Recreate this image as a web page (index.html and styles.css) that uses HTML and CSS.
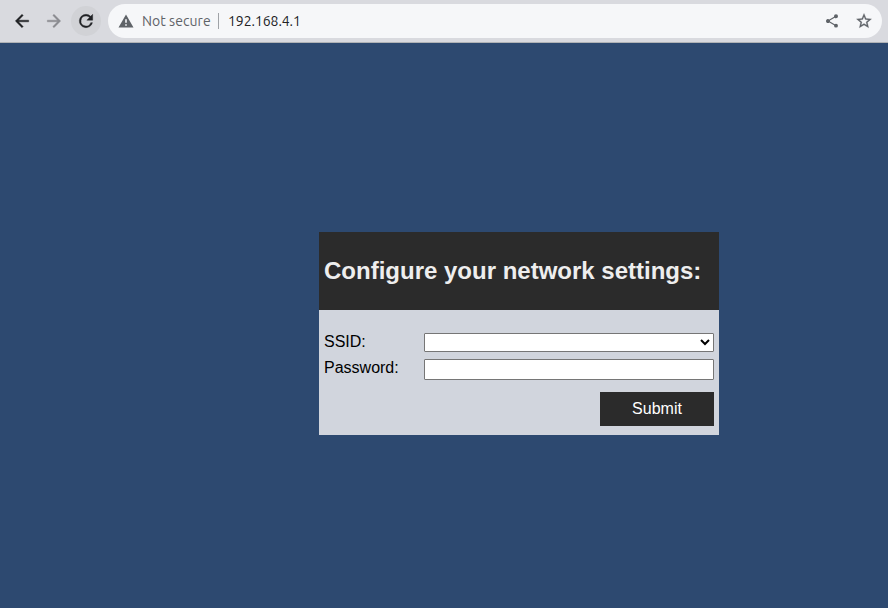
FILE: index.html
```html
<!DOCTYPE html>
<html lang="en">
<head>
<meta charset="utf-8">
<title>Network settings</title>
<link rel="stylesheet" href="styles.css">
</head>
<body>
<header class="toolbar">
  <span class="nav"><svg class="icon" viewBox="0 0 24 24"><path d="M20 11H7.83l5.59-5.59L12 4l-8 8 8 8 1.41-1.41L7.83 13H20z"/></svg></span>
  <span class="nav nav-off"><svg class="icon" viewBox="0 0 24 24"><path d="M12 4l-1.41 1.41L16.17 11H4v2h12.17l-5.58 5.59L12 20l8-8z"/></svg></span>
  <span class="nav nav-round"><svg class="icon" viewBox="0 0 24 24"><path d="M17.65 6.35A7.96 7.96 0 0 0 12 4a8 8 0 1 0 7.73 10h-2.08A6 6 0 1 1 12 6c1.66 0 3.14.69 4.22 1.78L13 11h7V4z"/></svg></span>
  <div class="address">
    <svg class="warning" viewBox="0 0 16 14"><path fill-rule="evenodd" d="M8 .5L15.5 13.500H.5zM7.200 5.200v3.600h1.600V5.200zM7.200 10.200v1.600h1.600v-1.600z"/></svg>
    <span class="status">Not secure</span>
    <span class="divider"></span>
    <span class="url">192.168.4.1</span>
    <svg class="share" viewBox="0 0 24 24"><path d="M18 16.080c-.76 0-1.440.3-1.960.77L8.910 12.700c.05-.23.09-.46.09-.7s-.04-.47-.09-.7l7.050-4.110c.54.5 1.250.81 2.040.81a3 3 0 1 0-3-3c0 .24.04.47.09.7L8.040 9.810A3 3 0 1 0 6 15c.79 0 1.500-.31 2.040-.81l7.120 4.160c-.05.21-.08.43-.08.65a2.920 2.920 0 1 0 2.920-2.920z"/></svg>
    <svg class="star" viewBox="0 0 24 24"><path d="M22 9.240l-7.190-.62L12 2 9.190 8.630 2 9.240l5.460 4.730L5.820 21 12 17.270 18.180 21l-1.630-7.030zM12 15.400l-3.760 2.270 1-4.280-3.320-2.880 4.380-.38L12 6.100l1.710 4.040 4.380.38-3.320 2.880 1 4.280z"/></svg>
  </div>
</header>
<main class="page">
  <form class="card">
    <h2 class="title">Configure your network settings:</h2>
    <div class="fields">
      <label class="label" for="ssid">SSID:</label>
      <select class="ssid" id="ssid"></select>
      <label class="label" for="password">Password:</label>
      <input class="password" id="password" type="password">
      <button class="submit" type="button">Submit</button>
    </div>
  </form>
</main>
</body>
</html>
```
FILE: styles.css
```css
* { box-sizing: border-box; }
body {
  margin: 0;
  height: 608px;
  overflow: hidden;
  background: #2d4970;
  font: 16px "Liberation Sans", Arial, sans-serif;
  color: #000;
}
.toolbar {
  display: flex;
  align-items: center;
  height: 43px;
  padding: 0 6px 1px 7px;
  background: #d9dadf;
  border-bottom: 1px solid #b0b3b6;
}
.nav {
  display: flex;
  align-items: center;
  justify-content: center;
  width: 30px;
  height: 30px;
  margin-right: 2px;
  border-radius: 50%;
  fill: #202124;
  stroke: #202124;
}
.nav-off { fill: #8a8b90; stroke: #8a8b90; }
.nav-round { background: #d1d2d6; }
.icon { width: 20px; height: 20px; margin-right: 1px; stroke-width: .5px; }
.address {
  display: flex;
  align-items: center;
  flex: 1;
  height: 34px;
  margin-left: 5px;
  padding: 0 9px 0 10px;
  border-radius: 17px;
  background: #f6f7f9;
  font: 14px/20px Ubuntu, "Noto Sans", sans-serif;
  fill: #5f6368;
}
.warning { width: 16px; height: 14px; }
.status { width: 69px; margin-left: 8px; color: #5f6368; white-space: nowrap; letter-spacing: .05px; }
.divider { width: 1px; height: 16px; margin: 0 9px 0 7px; background: #a0a3a7; }
.url { flex: 1; color: #202124; letter-spacing: -.06px; }
.share { width: 16px; height: 16px; margin-right: 15px; }
.star { width: 18px; height: 18px; stroke: #5f6368; stroke-width: .4px; }
.page { padding: 189px 0 0 319px; }
.card { width: 400px; height: 203px; background: #d1d5dd; }
.title {
  height: 78px;
  margin: 0;
  padding: 0 5px;
  background: #2b2b2b;
  color: #eee;
  font-size: 24px;
  line-height: 78px;
  white-space: nowrap;
}
.fields {
  display: grid;
  grid-template-columns: 100px 290px;
  grid-template-rows: 19px 21px 34px;
  row-gap: 7px;
  padding: 23px 5px 0;
}
.label { line-height: 18px; }
.ssid, .password { width: 290px; margin: 0; border: 1px solid #767676; background-color: #fff; }
.ssid { height: 19px; border-radius: 1px; }
.password { height: 21px; border-radius: 1px; }
.submit {
  grid-column: 2;
  justify-self: end;
  width: 114px;
  height: 34px;
  margin-top: 5px;
  padding: 0;
  border: 0;
  background: #2b2b2b;
  color: #fff;
  font: inherit;
}
```
